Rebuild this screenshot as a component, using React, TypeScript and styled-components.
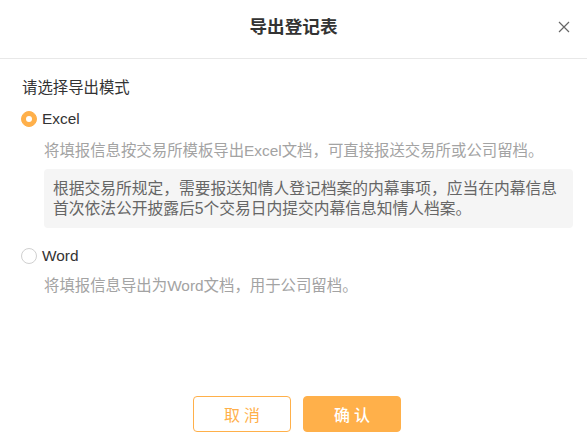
import * as React from 'react';
import styled, { createGlobalStyle } from 'styled-components';

const GlobalStyle = createGlobalStyle`
  html, body {
    margin: 0;
    padding: 0;
    background: #fff;
  }
  body {
    font-family: "Liberation Sans", "Noto Sans CJK SC", sans-serif;
    color: #333;
  }
`;

const orange = '#ffb04a';

const Dialog = styled.div`
  box-sizing: border-box;
  width: 587px;
  height: 447px;
  display: flex;
  flex-direction: column;
  background: #fff;
`;

const Header = styled.div`
  position: relative;
  height: 58px;
  border-bottom: 1px solid #e8e8e8;
  display: flex;
  align-items: center;
  justify-content: center;
`;

const Title = styled.h2`
  margin: 0;
  font-size: 17.6px;
  font-weight: bold;
  color: #333;
  line-height: 24px;
  margin-top: -4px;
`;

const CloseButton = styled.button`
  position: absolute;
  right: 16px;
  top: 20px;
  width: 14px;
  height: 14px;
  padding: 0;
  border: none;
  background: none;
  cursor: pointer;
  display: flex;
  align-items: center;
  justify-content: center;
`;

const Body = styled.div`
  padding: 18px 14px 0 22px;
  display: flex;
  flex-direction: column;
`;

const Label = styled.div`
  font-size: 15.4px;
  line-height: 22px;
  color: #333;
`;

const RadioRow = styled.label<{ $first?: boolean }>`
  display: flex;
  align-items: center;
  gap: 5px;
  margin-left: -1px;
  margin-top: ${p => (p.$first ? '9px' : '17px')};
  height: 22px;
  font-size: 15.4px;
  color: #333;
  cursor: pointer;
`;

const RadioCircle = styled.span<{ $checked?: boolean }>`
  box-sizing: border-box;
  width: 16px;
  height: 16px;
  border-radius: 50%;
  flex-shrink: 0;
  display: flex;
  align-items: center;
  justify-content: center;
  background: ${p => (p.$checked ? orange : '#fff')};
  border: 1px solid ${p => (p.$checked ? orange : '#d0d0d0')};
  &::after {
    content: '';
    display: ${p => (p.$checked ? 'block' : 'none')};
    width: 6px;
    height: 6px;
    border-radius: 50%;
    background: #fff;
  }
`;

const Desc = styled.div<{ $top: number }>`
  margin-top: ${p => p.$top}px;
  margin-left: 22px;
  font-size: 15.4px;
  line-height: 22px;
  color: #a3a3a3;
  white-space: nowrap;
`;

const Notice = styled.div`
  margin-top: 7px;
  margin-left: 22px;
  padding: 10px 8px 10px 9px;
  background: #f5f5f5;
  border-radius: 4px;
  font-size: 15.75px;
  line-height: 19.5px;
  color: #666;
`;

const Footer = styled.div`
  margin-top: auto;
  padding: 0 0 15px 7px;
  display: flex;
  justify-content: center;
  gap: 12px;
`;

const Button = styled.button<{ $primary?: boolean }>`
  box-sizing: border-box;
  width: 98px;
  height: 36px;
  border-radius: 4px;
  font-family: "Liberation Sans", "Noto Sans CJK SC", sans-serif;
  font-size: 16px;
  letter-spacing: 4px;
  padding: 0 0 0 4px;
  cursor: pointer;
  border: 1px solid ${orange};
  background: ${p => (p.$primary ? orange : '#fff')};
  color: ${p => (p.$primary ? '#fff' : orange)};
  font-weight: ${p => (p.$primary ? 500 : 400)};
`;

const CloseIcon = () => (
  <svg width="12" height="12" viewBox="0 0 12 12">
    <path d="M1 1 L11 11 M11 1 L1 11" stroke="#666" strokeWidth="1.2" fill="none" />
  </svg>
);

export default function App() {
  const [mode, setMode] = React.useState<'excel' | 'word'>('excel');
  return (
    <>
      <GlobalStyle />
      <Dialog>
        <Header>
          <Title>导出登记表</Title>
          <CloseButton aria-label="关闭">
            <CloseIcon />
          </CloseButton>
        </Header>
        <Body>
          <Label>请选择导出模式</Label>
          <RadioRow $first onClick={() => setMode('excel')}>
            <RadioCircle $checked={mode === 'excel'} />
            Excel
          </RadioRow>
          <Desc $top={10}>将填报信息按交易所模板导出Excel文档，可直接报送交易所或公司留档。</Desc>
          <Notice>
            根据交易所规定，需要报送知情人登记档案的内幕事项，应当在内幕信息首次依法公开披露后5个交易日内提交内幕信息知情人档案。
          </Notice>
          <RadioRow onClick={() => setMode('word')}>
            <RadioCircle $checked={mode === 'word'} />
            Word
          </RadioRow>
          <Desc $top={8}>将填报信息导出为Word文档，用于公司留档。</Desc>
        </Body>
        <Footer>
          <Button>取消</Button>
          <Button $primary>确认</Button>
        </Footer>
      </Dialog>
    </>
  );
}
